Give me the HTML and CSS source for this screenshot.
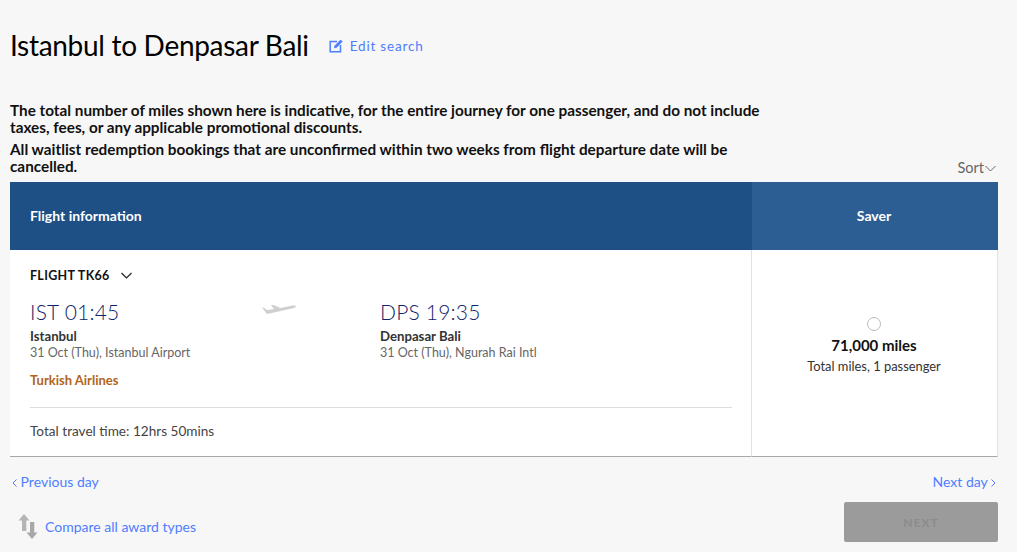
FILE: index.html
```html
<!DOCTYPE html>
<html lang="en">
<head>
    <meta charset="UTF-8">
    <title>Istanbul to Denpasar Bali</title>
    <link rel="stylesheet" href="styles.css">
</head>
<body>
    <div class="title-row">
        <h1>Istanbul to Denpasar Bali</h1>
        <a class="edit-link" href="#">
            <svg class="edit-icon" viewBox="0 0 14 14" width="14" height="14" fill="none" stroke="#4f7dff">
                <path d="M8 2.500H1.200v10.300h10.300V6" stroke-width="1.500"/>
                <path d="M5.500 8.800l.4-2L11.600 1l1.600 1.600-5.700 5.800z" fill="#4f7dff" stroke-width="0.800"/>
            </svg>
            Edit search
        </a>
    </div>

    <div class="notes">
        <p>The total number of miles shown here is indicative, for the entire journey for one passenger, and do not include taxes, fees, or any applicable promotional discounts.</p>
        <p>All waitlist redemption bookings that are unconfirmed within two weeks from flight departure date will be cancelled.</p>
    </div>

    <div class="sort-row">
        <span class="sort">Sort
            <svg viewBox="0 0 11 7" width="11" height="7" fill="none" stroke="#666" stroke-width="1"><path d="M.5 1l5 5 5-5"/></svg>
        </span>
    </div>

    <div class="results">
        <div class="head-info">Flight information</div>
        <div class="head-saver">Saver</div>

        <div class="flight">
            <div class="flight-no">FLIGHT TK66
                <svg viewBox="0 0 11 7" width="11" height="7" fill="none" stroke="#222" stroke-width="1.200"><path d="M.5 1l5 5 5-5"/></svg>
            </div>
            <div class="route">
                <div class="stop">
                    <div class="time">IST 01:45</div>
                    <div class="city">Istanbul</div>
                    <div class="place">31 Oct (Thu), Istanbul Airport</div>
                </div>
                <div class="plane">
                    <svg viewBox="0 0 34 14" width="34" height="14" fill="#cfcfcf">
                        <path d="M0 6.500l2 .2 3 2.200 7-1L9 4.300l2.500-.3 7 3 12-2.400c2-.4 3.500.3 3.500 1 0 .7-1.500 1.300-3 1.600L12 11.500l-7 1.500C3.500 11 1.500 8.500 0 6.500z"/>
                    </svg>
                </div>
                <div class="stop">
                    <div class="time">DPS 19:35</div>
                    <div class="city">Denpasar Bali</div>
                    <div class="place">31 Oct (Thu), Ngurah Rai Intl</div>
                </div>
            </div>
            <div class="airline">Turkish Airlines</div>
            <div class="travel-time">Total travel time: 12hrs 50mins</div>
        </div>

        <div class="fare">
            <span class="radio"></span>
            <div class="miles">71,000 miles</div>
            <div class="miles-note">Total miles, 1 passenger</div>
        </div>
    </div>

    <div class="day-nav">
        <a href="#"><svg viewBox="0 0 5 8" width="5" height="8" fill="none" stroke="#4f7dff"><path d="M4.500.5L1 4l3.500 3.500"/></svg> Previous day</a>
        <a href="#">Next day <svg viewBox="0 0 5 8" width="5" height="8" fill="none" stroke="#4f7dff"><path d="M.5.5L4 4 .5 7.500"/></svg></a>
    </div>

    <div class="footer-row">
        <a class="compare" href="#">
            <svg viewBox="0 0 20 25" width="20" height="25" fill="#b5b5b5">
                <path d="M6 0l5.500 6.500H8.300V17H4V6.500H.5z"/>
                <path d="M12 8h4.300v10.500h3.200L14 25l-5.500-6.500H12z" fill="#a8a8a8"/>
            </svg>
            Compare all award types
        </a>
        <button class="next" disabled>NEXT</button>
    </div>
</body>
</html>
```

FILE: styles.css
```css
body { margin: 0; width: 998px; padding-left: 10px; box-sizing: border-box; background: #f7f7f7; font-family: Lato, sans-serif; color: #222; font-size: 14px; height: 552px; overflow: hidden; }
a { color: #4f7dff; text-decoration: none; }

.title-row { display: flex; align-items: center; height: 92px; padding-bottom: 2px; box-sizing: border-box; }
h1 { margin: 0; font-weight: 400; font-size: 28px; letter-spacing: -0.3px; color: #000; }
.edit-link { display: flex; align-items: center; gap: 7px; margin-left: 20px; margin-top: 2px; font-size: 13.500px; letter-spacing: 0.8px; }

.notes { width: 770px; margin-top: 10px; font-size: 15.300px; font-weight: 700; line-height: 17px; color: #111; }
.notes p { margin: 0 0 5px; }
.notes p:last-child { margin-bottom: 0; }

.sort-row { display: flex; justify-content: flex-end; align-items: flex-start; margin-top: -17px; height: 24px; padding-right: 2px; }
.sort { font-size: 14.500px; line-height: 20px; color: #666; display: flex; align-items: center; gap: 1px; }

.results { display: grid; grid-template-columns: 742px 246px; grid-template-rows: 68px 207px; }
.head-info, .head-saver { display: flex; align-items: center; padding-bottom: 2px; color: #fff; font-size: 14px; font-weight: 700; }
.head-info { background: #1e4f85; padding-left: 20px; }
.head-saver { background: #2d5e93; justify-content: center; padding-right: 2px; }

.flight { background: #fff; padding: 0 20px; border-bottom: 1px solid #a8a8a8; }
.flight-no { display: flex; align-items: center; gap: 11px; margin-top: 18px; font-size: 12.500px; font-weight: 700; color: #111; letter-spacing: 0.3px; }
.route { display: flex; margin-top: 16px; }
.stop { width: 232px; }
.stop:last-child { width: auto; }
.plane { width: 118px; padding-top: 2px; }
.time { font-size: 21px; font-weight: 300; line-height: 26px; color: #0f2468; letter-spacing: 0.2px; }
.city { margin-top: 3px; font-size: 13.200px; font-weight: 700; color: #333; line-height: 16px; }
.place { margin-top: 1px; font-size: 12.500px; color: #666; line-height: 16px; }
.airline { margin-top: 11px; font-size: 13px; font-weight: 700; color: #b1641a; line-height: 16px; }
.travel-time { margin-top: 19px; padding-top: 15px; border-top: 1px solid #ddd; color: #444; font-size: 13.600px; line-height: 16px; }

.fare { display: flex; flex-direction: column; align-items: center; margin-left: -1px; padding-right: 1px; background: #fff; border-left: 1px solid #e2e2e2; border-right: 1px solid #e2e2e2; border-bottom: 1px solid #a8a8a8; }
.radio { width: 12px; height: 12px; margin-top: 67px; border: 1px solid #bbb; border-radius: 50%; background: #fff; }
.miles { margin-top: 4px; font-size: 15px; font-weight: 700; color: #111; line-height: 20px; }
.miles-note { margin-top: 3px; font-size: 12.900px; color: #333; line-height: 16px; }

.day-nav { display: flex; justify-content: space-between; padding: 16px 2px 0; font-size: 14px; line-height: 17px; }

.footer-row { display: flex; justify-content: space-between; align-items: flex-start; margin-top: 12px; }
.compare { display: flex; align-items: center; gap: 7px; margin: 12px 0 0 8px; font-size: 14px; }
.next { width: 154px; height: 40px; background: #9b9b9b; border: none; border-radius: 2px; color: #8c8c8c; font-family: inherit; font-size: 12px; font-weight: 700; letter-spacing: 1px; }
```
